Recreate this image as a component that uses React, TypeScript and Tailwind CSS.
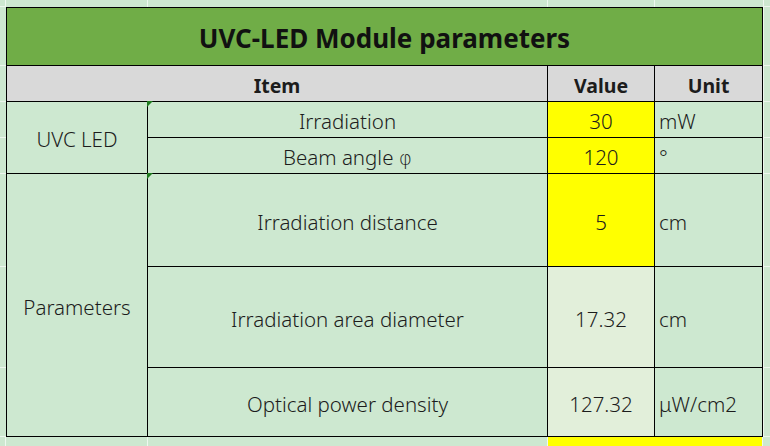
import React from "react";

const font = { fontFamily: '"Noto Sans", "Open Sans", "Liberation Sans", sans-serif' };

function Tri() {
  return (
    <div
      className="absolute left-[-1px] top-[-1px] h-[6px] w-[6px] bg-[#1f7a1f]"
      style={{ clipPath: "polygon(0 0, 100% 0, 0 100%)" }}
    />
  );
}

const cell = "border-r border-b border-black flex items-center justify-center pt-[4px]";
const t = "text-[20.5px] font-light";
const h = "text-[19.5px] font-bold bg-[#d9d9d9]";

export default function App() {
  const rowTracks = ["h-[59px]", "h-[36px]", "h-[36px]", "h-[36px]", "h-[93px]", "h-[101px]", "h-[69px]"];
  return (
    <div className="w-[770px] h-[446px] bg-[#cde8d0] flex flex-col overflow-hidden text-[#1c1c1c]" style={font}>
      {/* top strip */}
      <div className="grid grid-cols-[6px_142px_400px_107px_109px_1fr] h-[7px]">
        <div className="border-r border-b border-[#eef7ef]" />
        <div className="border-r border-[#eef7ef]" />
        <div className="border-r border-[#eef7ef]" />
        <div className="border-r border-[#eef7ef]" />
        <div className="border-r border-[#eef7ef]" />
        <div className="border-b border-[#eef7ef]" />
      </div>
      {/* middle */}
      <div className="flex h-[430px]">
        <div className="w-[6px] flex flex-col">
          {rowTracks.map((hh, i) => (
            <div key={i} className={`${hh} border-b border-[#eef7ef]`} />
          ))}
        </div>
        <div className="w-[757px] border-l border-t border-black grid grid-cols-[141px_400px_107px_1fr] grid-rows-[58px_36px_36px_36px_93px_101px_69px]">
          <div className={`${cell} col-span-4 bg-[#70ad47] text-[26px] font-bold text-[#111]`}>UVC-LED Module parameters</div>

          <div className={`${cell} col-span-2 ${h}`}>Item</div>
          <div className={`${cell} ${h}`}>Value</div>
          <div className={`${cell} ${h}`}>Unit</div>

          <div className={`${cell} row-span-2 ${t}`}>UVC LED</div>
          <div className={`${cell} relative ${t}`}>
            <Tri />
            Irradiation
          </div>
          <div className={`${cell} bg-[#ffff00] ${t}`}>30</div>
          <div className={`${cell} !justify-start pl-[4px] ${t}`}>mW</div>

          <div className={`${cell} ${t}`}>
            <span>
              Beam angle{" "}
              <span style={{ fontFamily: '"DejaVu Sans", sans-serif' }} className="text-[20px] font-extralight">φ</span>
            </span>
          </div>
          <div className={`${cell} bg-[#ffff00] ${t}`}>120</div>
          <div className={`${cell} !justify-start pl-[4px] ${t}`}>°</div>

          <div className={`${cell} row-span-3 ${t}`}>Parameters</div>
          <div className={`${cell} relative ${t}`}>
            <Tri />
            Irradiation distance
          </div>
          <div className={`${cell} bg-[#ffff00] ${t}`}>5</div>
          <div className={`${cell} !justify-start pl-[4px] ${t}`}>cm</div>

          <div className={`${cell} ${t}`}>Irradiation area diameter</div>
          <div className={`${cell} bg-[#e2efda] ${t}`}>17.32</div>
          <div className={`${cell} !justify-start pl-[4px] ${t}`}>cm</div>

          <div className={`${cell} ${t}`}>Optical power density</div>
          <div className={`${cell} bg-[#e2efda] ${t}`}>127.32</div>
          <div className={`${cell} !justify-start pl-[4px] ${t}`}>μW/cm2</div>
        </div>
        <div className="flex-1 flex flex-col border-l border-[#eef7ef]">
          {rowTracks.map((hh, i) => (
            <div key={i} className={`${hh} border-b border-[#eef7ef]`} />
          ))}
        </div>
      </div>
      {/* bottom strip */}
      <div className="grid grid-cols-[6px_142px_400px_215px_1fr] flex-1">
        <div className="border-r border-[#eef7ef]" />
        <div className="border-r border-[#eef7ef]" />
        <div className="border-r border-[#eef7ef]" />
        <div className="bg-[#ffff00] border-r border-[#eef7ef]" />
        <div />
      </div>
    </div>
  );
}
